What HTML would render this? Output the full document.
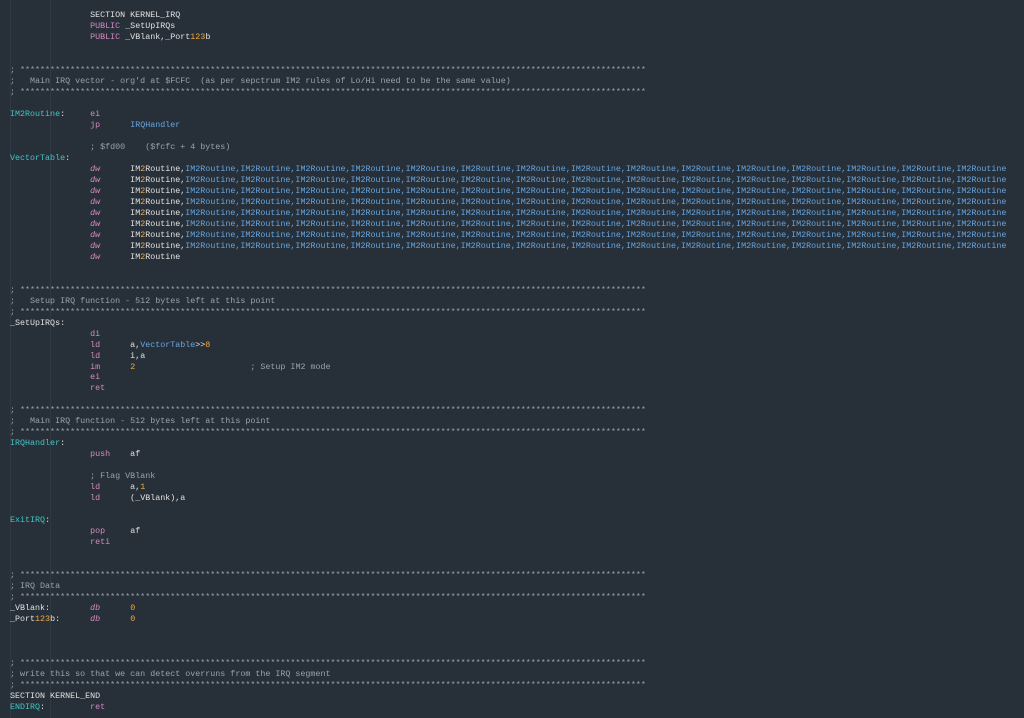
<!DOCTYPE html>
<html><head><meta charset="utf-8"><style>
html,body{margin:0;padding:0;background:#272f38;width:1024px;height:718px;overflow:hidden}
pre{margin:0;position:absolute;left:10px;top:10px;font-family:"Liberation Mono",monospace;font-size:8.36px;line-height:10.98px;color:#e2e2e2;white-space:pre}
.c{color:#9aa2aa}.l{color:#45c4c4}.k{color:#d48ac0}.i{color:#d48ac0;font-style:italic}.b{color:#67a6e0}.n{color:#f0aa40}
.g{position:absolute;top:0;width:1px;height:718px;background:#303943}
</style></head><body>
<div class="g" style="left:10px"></div><div class="g" style="left:50px"></div>
<pre>                SECTION KERNEL_IRQ
                <span class="k">PUBLIC</span> _SetUpIRQs
                <span class="k">PUBLIC</span> _VBlank,_Port<span class="n">123</span>b


<span class="c">; *****************************************************************************************************************************
;   Main IRQ vector - org'd at $FCFC  (as per sepctrum IM2 rules of Lo/Hi need to be the same value)
; *****************************************************************************************************************************</span>

<span class="l">IM2Routine</span>:     <span class="k">ei</span>
                <span class="k">jp</span>      <span class="b">IRQHandler</span>

                <span class="c">; $fd00    ($fcfc + 4 bytes)</span>
<span class="l">VectorTable</span>:
                <span class="i">dw</span>      IM<span class="n">2</span>Routine,<span class="b">IM2Routine,IM2Routine,IM2Routine,IM2Routine,IM2Routine,IM2Routine,IM2Routine,IM2Routine,IM2Routine,IM2Routine,IM2Routine,IM2Routine,IM2Routine,IM2Routine,IM2Routine</span>
                <span class="i">dw</span>      IM<span class="n">2</span>Routine,<span class="b">IM2Routine,IM2Routine,IM2Routine,IM2Routine,IM2Routine,IM2Routine,IM2Routine,IM2Routine,IM2Routine,IM2Routine,IM2Routine,IM2Routine,IM2Routine,IM2Routine,IM2Routine</span>
                <span class="i">dw</span>      IM<span class="n">2</span>Routine,<span class="b">IM2Routine,IM2Routine,IM2Routine,IM2Routine,IM2Routine,IM2Routine,IM2Routine,IM2Routine,IM2Routine,IM2Routine,IM2Routine,IM2Routine,IM2Routine,IM2Routine,IM2Routine</span>
                <span class="i">dw</span>      IM<span class="n">2</span>Routine,<span class="b">IM2Routine,IM2Routine,IM2Routine,IM2Routine,IM2Routine,IM2Routine,IM2Routine,IM2Routine,IM2Routine,IM2Routine,IM2Routine,IM2Routine,IM2Routine,IM2Routine,IM2Routine</span>
                <span class="i">dw</span>      IM<span class="n">2</span>Routine,<span class="b">IM2Routine,IM2Routine,IM2Routine,IM2Routine,IM2Routine,IM2Routine,IM2Routine,IM2Routine,IM2Routine,IM2Routine,IM2Routine,IM2Routine,IM2Routine,IM2Routine,IM2Routine</span>
                <span class="i">dw</span>      IM<span class="n">2</span>Routine,<span class="b">IM2Routine,IM2Routine,IM2Routine,IM2Routine,IM2Routine,IM2Routine,IM2Routine,IM2Routine,IM2Routine,IM2Routine,IM2Routine,IM2Routine,IM2Routine,IM2Routine,IM2Routine</span>
                <span class="i">dw</span>      IM<span class="n">2</span>Routine,<span class="b">IM2Routine,IM2Routine,IM2Routine,IM2Routine,IM2Routine,IM2Routine,IM2Routine,IM2Routine,IM2Routine,IM2Routine,IM2Routine,IM2Routine,IM2Routine,IM2Routine,IM2Routine</span>
                <span class="i">dw</span>      IM<span class="n">2</span>Routine,<span class="b">IM2Routine,IM2Routine,IM2Routine,IM2Routine,IM2Routine,IM2Routine,IM2Routine,IM2Routine,IM2Routine,IM2Routine,IM2Routine,IM2Routine,IM2Routine,IM2Routine,IM2Routine</span>
                <span class="i">dw</span>      IM<span class="n">2</span>Routine


<span class="c">; *****************************************************************************************************************************
;   Setup IRQ function - 512 bytes left at this point
; *****************************************************************************************************************************</span>
_SetUpIRQs:
                <span class="k">di</span>
                <span class="k">ld</span>      a,<span class="b">VectorTable</span>&gt;&gt;<span class="n">8</span>
                <span class="k">ld</span>      i,a
                <span class="k">im</span>      <span class="n">2</span>                       <span class="c">; Setup IM2 mode</span>
                <span class="k">ei</span>
                <span class="k">ret</span>

<span class="c">; *****************************************************************************************************************************
;   Main IRQ function - 512 bytes left at this point
; *****************************************************************************************************************************</span>
<span class="l">IRQHandler</span>:
                <span class="k">push</span>    af

                <span class="c">; Flag VBlank</span>
                <span class="k">ld</span>      a,<span class="n">1</span>
                <span class="k">ld</span>      (_VBlank),a

<span class="l">ExitIRQ</span>:
                <span class="k">pop</span>     af
                <span class="k">reti</span>


<span class="c">; *****************************************************************************************************************************
; IRQ Data
; *****************************************************************************************************************************</span>
_VBlank:        <span class="i">db</span>      <span class="n">0</span>
_Port<span class="n">123</span>b:      <span class="i">db</span>      <span class="n">0</span>



<span class="c">; *****************************************************************************************************************************
; write this so that we can detect overruns from the IRQ segment
; *****************************************************************************************************************************</span>
SECTION KERNEL_END
<span class="l">ENDIRQ</span>:         <span class="k">ret</span>
</pre>
</body></html>
